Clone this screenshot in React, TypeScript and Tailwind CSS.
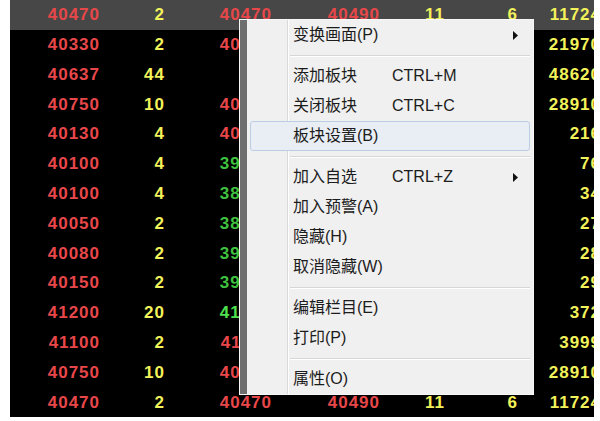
const RED = "text-[#e8474a]";
const YEL = "text-[#f2f25a]";
const GRN = "text-[#3fc23f]";
const GRN2 = "text-[#4fe04f]";

interface Row {
  a: string; b: string; c: string; cc: string; d: string; e: string; f: string; g: string;
}

const ROWS: Row[] = [
  { a: "40470", b: "2", c: "40470", cc: RED, d: "40490", e: "11", f: "6", g: "11724" },
  { a: "40330", b: "2", c: "40330", cc: RED, d: "", e: "", f: "", g: "21970" },
  { a: "40637", b: "44", c: "", cc: RED, d: "", e: "", f: "", g: "48620" },
  { a: "40750", b: "10", c: "40750", cc: RED, d: "", e: "", f: "", g: "28910" },
  { a: "40130", b: "4", c: "40130", cc: RED, d: "", e: "", f: "", g: "216" },
  { a: "40100", b: "4", c: "39980", cc: GRN, d: "", e: "", f: "", g: "76" },
  { a: "40100", b: "4", c: "38990", cc: GRN, d: "", e: "", f: "", g: "34" },
  { a: "40050", b: "2", c: "38990", cc: GRN, d: "", e: "", f: "", g: "27" },
  { a: "40080", b: "2", c: "39980", cc: GRN, d: "", e: "", f: "", g: "28" },
  { a: "40150", b: "2", c: "39990", cc: GRN, d: "", e: "", f: "", g: "29" },
  { a: "41200", b: "20", c: "41200", cc: GRN2, d: "", e: "", f: "", g: "372" },
  { a: "41100", b: "2", c: "41100", cc: RED, d: "", e: "", f: "", g: "3999" },
  { a: "40750", b: "10", c: "40750", cc: RED, d: "", e: "", f: "", g: "28910" },
  { a: "40470", b: "2", c: "40470", cc: RED, d: "40490", e: "11", f: "6", g: "11724" },
];

type Item = { t: "item"; label: string; key?: string; sub?: boolean; hi?: boolean } | { t: "sep" };

const MENU: Item[] = [
  { t: "item", label: "变换画面(P)", sub: true },
  { t: "sep" },
  { t: "item", label: "添加板块", key: "CTRL+M" },
  { t: "item", label: "关闭板块", key: "CTRL+C" },
  { t: "item", label: "板块设置(B)", hi: true },
  { t: "sep" },
  { t: "item", label: "加入自选", key: "CTRL+Z", sub: true },
  { t: "item", label: "加入预警(A)" },
  { t: "item", label: "隐藏(H)" },
  { t: "item", label: "取消隐藏(W)" },
  { t: "sep" },
  { t: "item", label: "编辑栏目(E)" },
  { t: "item", label: "打印(P)" },
  { t: "sep" },
  { t: "item", label: "属性(O)" },
];

function Arrow() {
  return (
    <svg width="6" height="9" viewBox="0 0 6 9" className="absolute left-[262px] top-[10px]">
      <polygon points="0,0 5,4.5 0,9" fill="#111" />
    </svg>
  );
}

export default function App() {
  return (
    <div className="relative w-[600px] h-[421px] bg-white overflow-hidden">
      {/* quote table */}
      <div className="ml-[10px] w-[584px] h-[417px] bg-black overflow-hidden font-['Liberation_Sans',Arial,sans-serif] font-bold text-[17px] tracking-[1px]">
        {ROWS.map((r, i) => (
          <div key={i} className={`flex items-center h-[29.8px] w-[600px] ${i === 0 ? "bg-[#474747]" : ""}`}>
            <div className={`w-[90px] text-right shrink-0 ${RED}`}>{r.a}</div>
            <div className={`w-[65px] text-right shrink-0 ${YEL}`}>{r.b}</div>
            <div className={`w-[107px] text-right shrink-0 ${r.cc}`}>{r.c}</div>
            <div className={`w-[108px] text-right shrink-0 ${RED}`}>{r.d}</div>
            <div className={`w-[65px] text-right shrink-0 ${YEL}`}>{r.e}</div>
            <div className={`w-[73px] text-right shrink-0 ${YEL}`}>{r.f}</div>
            <div className={`w-[83px] text-right shrink-0 ${YEL}`}>{r.g}</div>
          </div>
        ))}
      </div>

      {/* context menu */}
      <div className="absolute left-[239px] top-[19px] w-[295px] h-[376px] border border-[#f7f7f7] flex font-['Liberation_Sans','Noto_Sans_CJK_SC',sans-serif] text-[16px] text-[#1c1c1c]">
        <div className="w-[7px] bg-[#6e6e6e] shrink-0" />
        <div className="relative flex-1 bg-[#f0f0f0]">
          <div className="absolute left-[40px] top-0 bottom-0 w-[1px] bg-[#d9d9d9]" />
          <div className="absolute left-[41px] top-0 bottom-0 w-[1px] bg-white" />
          <div className="relative flex flex-col">
            {MENU.map((m, i) =>
              m.t === "sep" ? (
                <div key={i} className="h-[11px] flex flex-col justify-center ml-[43px] mr-[3px]">
                  <div className="h-[1px] bg-[#d7d7d7]" />
                  <div className="h-[1px] bg-white" />
                </div>
              ) : (
                <div
                  key={i}
                  className={`relative h-[30px] flex items-center mx-[3px] rounded-[3px] border ${m.hi ? "border-[#b9cde3] bg-[#e9eef5]" : "border-transparent"}`}
                >
                  <span className="absolute left-[42px] leading-none">{m.label}</span>
                  {m.key && <span className="absolute left-[141px] leading-none">{m.key}</span>}
                  {m.sub && <Arrow />}
                </div>
              )
            )}
          </div>
        </div>
      </div>
    </div>
  );
}
